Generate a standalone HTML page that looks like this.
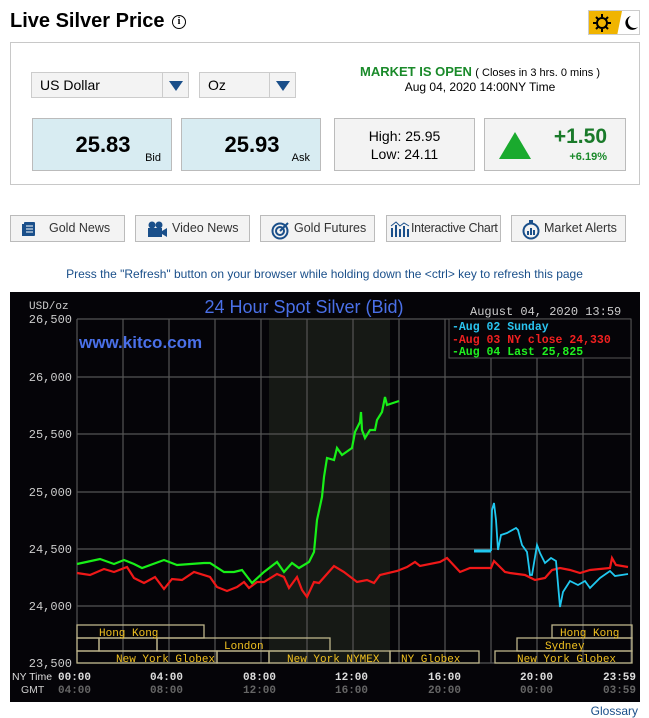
<!DOCTYPE html>
<html><head><meta charset="utf-8"><style>
*{box-sizing:border-box;margin:0;padding:0}
body{width:649px;height:717px;background:#fff;font-family:"Liberation Sans",Arial,sans-serif;position:relative;overflow:hidden;color:#000}
.a{position:absolute}
.box{position:absolute;border:1px solid #c8c8c8}
.sel{position:absolute;height:26px;border:1px solid #ccc;background:#f3f3f3;font-size:14px;line-height:24px;padding-left:8px}
.sel .ar{position:absolute;right:0;top:0;width:26px;height:24px;border-left:1px solid #ccc}
.sel .ar:after{content:"";position:absolute;left:6px;top:8px;border-left:7px solid transparent;border-right:7px solid transparent;border-top:10px solid #1a4f8a}
.pb{position:absolute;top:118px;height:53px;border:1px solid #bbb}
.btn{position:absolute;top:215px;height:27px;width:115px;border:1px solid #bbb;background:#f3f3f3;font-size:12.5px;color:#333;line-height:25px;white-space:nowrap;overflow:hidden}
.btn svg{position:absolute;left:10px;top:4px}
.btn span{position:absolute}
</style></head><body>
<div class="a" style="left:10px;top:10px;font-size:20px;font-weight:bold;">Live Silver Price</div>
<div class="a" style="left:172px;top:15px;width:14px;height:14px;border:1.6px solid #000;border-radius:50%;font-size:10px;font-weight:bold;text-align:center;line-height:11px;font-family:'Liberation Serif',serif">i</div>
<div class="a" style="left:588px;top:10px;width:52px;height:25px;border:1px solid #ccc;overflow:hidden">
<svg width="52" height="25"><polygon points="0,0 33,0 28,25 0,25" fill="#f0b400"/><circle cx="13" cy="12" r="5" fill="none" stroke="#000" stroke-width="2"/><g stroke="#000" stroke-width="2"><line x1="13" y1="3" x2="13" y2="6"/><line x1="13" y1="18" x2="13" y2="21"/><line x1="4" y1="12" x2="7" y2="12"/><line x1="19" y1="12" x2="22" y2="12"/><line x1="7" y1="6" x2="9" y2="8"/><line x1="17" y1="16" x2="19" y2="18"/><line x1="19" y1="6" x2="17" y2="8"/><line x1="7" y1="18" x2="9" y2="16"/></g><path d="M42 5 A7 7 0 1 0 49 16 A6 6 0 0 1 42 5Z" fill="#000"/></svg></div>

<div class="box" style="left:10px;top:42px;width:630px;height:143px"></div>
<div class="sel" style="left:31px;top:72px;width:158px">US Dollar<div class="ar"></div></div>
<div class="sel" style="left:199px;top:72px;width:97px">Oz<div class="ar"></div></div>
<div class="a" style="left:340px;top:65px;width:280px;text-align:center;font-size:12px;line-height:14px"><b style="color:#1a8a2a;font-size:13px">MARKET IS OPEN</b> <span style="font-size:11px">( Closes in 3 hrs. 0 mins )</span><br>Aug 04, 2020 14:00NY Time</div>

<div class="pb" style="left:32px;width:140px;background:#d8ecf2"><div class="a" style="left:0;width:140px;top:13px;text-align:center;font-size:22px;font-weight:bold">25.83</div><div class="a" style="right:10px;top:33px;font-size:11px">Bid</div></div>
<div class="pb" style="left:181px;width:140px;background:#d8ecf2"><div class="a" style="left:0;width:140px;top:13px;text-align:center;font-size:22px;font-weight:bold">25.93</div><div class="a" style="right:10px;top:33px;font-size:11px">Ask</div></div>
<div class="pb" style="left:334px;width:141px;background:#f3f3f3;text-align:center;font-size:14px;line-height:18px;padding-top:8px">High: 25.95<br>Low: 24.11</div>
<div class="pb" style="left:484px;width:142px;background:#f3f3f3"><svg class="a" style="left:14px;top:13px" width="32" height="28"><polygon points="16,0 32,27 0,27" fill="#1aaa2e"/></svg><div class="a" style="right:18px;top:6px;font-size:21px;font-weight:bold;color:#1a7a2a">+1.50</div><div class="a" style="right:18px;top:32px;font-size:11px;font-weight:bold;color:#1a8a2a">+6.19%</div></div>

<div class="btn" style="left:10px"><svg width="16" height="18"><rect x="3" y="2" width="11" height="14" rx="1" fill="#1a4f8a"/><rect x="1" y="4" width="3" height="12" fill="#1a4f8a"/><g stroke="#fff" stroke-width="1"><line x1="5" y1="6" x2="12" y2="6"/><line x1="5" y1="9" x2="12" y2="9"/><line x1="5" y1="12" x2="12" y2="12"/></g></svg><span style="left:38px">Gold News</span></div>
<div class="btn" style="left:135px"><svg width="22" height="18"><circle cx="6" cy="5" r="3.5" fill="#1a4f8a"/><circle cx="13" cy="5" r="3.5" fill="#1a4f8a"/><rect x="2" y="8" width="14" height="9" fill="#1a4f8a"/><polygon points="16,11 21,8 21,17 16,14" fill="#1a4f8a"/></svg><span style="left:36px">Video News</span></div>
<div class="btn" style="left:260px"><svg width="20" height="20"><circle cx="9" cy="11" r="7.5" fill="none" stroke="#1a4f8a" stroke-width="2"/><circle cx="9" cy="11" r="4" fill="none" stroke="#1a4f8a" stroke-width="2"/><line x1="9" y1="11" x2="17" y2="3" stroke="#1a4f8a" stroke-width="2"/></svg><span style="left:33px">Gold Futures</span></div>
<div class="btn" style="left:386px"><svg width="20" height="18" style="left:3px"><g fill="#1a4f8a"><rect x="1" y="8" width="2" height="9"/><rect x="5" y="5" width="2" height="12"/><rect x="9" y="9" width="2" height="8"/><rect x="13" y="6" width="2" height="11"/><rect x="17" y="9" width="2" height="8"/></g><polyline points="1,6 6,2 10,6 14,3 19,6" fill="none" stroke="#1a4f8a"/></svg><span style="left:24px;letter-spacing:-0.3px">Interactive Chart</span></div>
<div class="btn" style="left:511px"><svg width="18" height="20"><circle cx="9" cy="11" r="7.5" fill="none" stroke="#1a4f8a" stroke-width="2"/><rect x="7" y="0" width="4" height="3" fill="#1a4f8a"/><g fill="#1a4f8a"><rect x="5" y="11" width="2" height="4"/><rect x="8" y="8" width="2" height="7"/><rect x="11" y="10" width="2" height="5"/></g></svg><span style="left:32px">Market Alerts</span></div>

<div class="a" style="left:0;width:649px;top:267px;text-align:center;font-size:12px;color:#1a4f8a">Press the "Refresh" button on your browser while holding down the &lt;ctrl&gt; key to refresh this page</div>

<svg class="a" style="left:10px;top:292px" width="630" height="410" viewBox="10 292 630 410">
<rect x="10" y="292" width="630" height="410" fill="#050408"/>
<rect x="269" y="319" width="121" height="344" fill="#161915"/>
<g stroke="#555" stroke-width="1.2" fill="none">
<line x1="77" y1="319" x2="631" y2="319"/><line x1="77" y1="377" x2="631" y2="377"/><line x1="77" y1="434" x2="631" y2="434"/><line x1="77" y1="492" x2="631" y2="492"/><line x1="77" y1="549" x2="631" y2="549"/><line x1="77" y1="606" x2="631" y2="606"/><line x1="77" y1="663" x2="631" y2="663"/>
<line x1="77" y1="319" x2="77" y2="663"/><line x1="123" y1="319" x2="123" y2="663"/><line x1="169" y1="319" x2="169" y2="663"/><line x1="215" y1="319" x2="215" y2="663"/><line x1="261" y1="319" x2="261" y2="663"/><line x1="307" y1="319" x2="307" y2="663"/><line x1="353" y1="319" x2="353" y2="663"/><line x1="399" y1="319" x2="399" y2="663"/><line x1="445" y1="319" x2="445" y2="663"/><line x1="491" y1="319" x2="491" y2="663"/><line x1="537" y1="319" x2="537" y2="663"/><line x1="583" y1="319" x2="583" y2="663"/><line x1="631" y1="319" x2="631" y2="663"/>
</g>
<rect x="449" y="319" width="182" height="39" fill="#050408" stroke="#555"/>
<g font-family="Liberation Mono,monospace" font-size="11.5" font-weight="bold">
<text x="452" y="330" fill="#2ac4f0">-Aug 02 Sunday</text>
<text x="452" y="343" fill="#f02020">-Aug 03 NY close 24,330</text>
<text x="452" y="355" fill="#20f020">-Aug 04 Last 25,825</text>
</g>
<g font-family="Liberation Mono,monospace" font-size="12" fill="#ccc" text-anchor="end">
<text x="72" y="323">26,500</text><text x="72" y="381">26,000</text><text x="72" y="438">25,500</text><text x="72" y="496">25,000</text><text x="72" y="553">24,500</text><text x="72" y="610">24,000</text><text x="72" y="667">23,500</text>
</g>
<text x="29" y="309" font-family="Liberation Mono,monospace" font-size="11" fill="#ccc">USD/oz</text>
<text x="304" y="313" font-family="Liberation Sans,sans-serif" font-size="18" fill="#4a70e8" text-anchor="middle">24 Hour Spot Silver (Bid)</text>
<text x="470" y="315" font-family="Liberation Mono,monospace" font-size="12" fill="#ccc">August 04, 2020 13:59</text>
<text x="79" y="348" font-family="Liberation Sans,sans-serif" font-size="17" font-weight="bold" fill="#4a70e8">www.kitco.com</text>
<polyline fill="none" stroke="#f01818" stroke-width="2.2" points="77,573 90,575 104,569 114,572 127,567 134,578 144,583 155,577 164,589 172,579 182,580 194,572 210,577 217,587 227,591 237,587 244,582 249,588 257,582 264,582 277,574 284,577 289,588 297,577 302,590 307,597 314,582 319,583 334,566 344,572 357,582 367,580 374,583 380,575 397,571 407,567 415,562 420,566 440,562 447,558 460,572 470,568 491,568 494,561 505,572 510,573 525,575 535,580 545,578 552,570 560,568 570,570 580,573 590,570 610,568 612,558 616,565 628,567"/>
<polyline fill="none" stroke="#18f018" stroke-width="2.2" points="77,564 100,559 114,564 124,560 134,564 142,568 164,560 177,565 204,563 210,563 224,572 234,572 242,570 252,583 264,572 277,562 284,572 292,563 299,568 309,562 314,552 317,520 322,497 324,477 327,458 334,460 337,448 342,455 352,448 355,432 360,422 361,412 362,430 365,438 370,430 375,430 377,420 382,412 385,397 387,405 399,401"/>
<line x1="474" y1="551" x2="491" y2="551" stroke="#20c8f0" stroke-width="3"/>
<polyline fill="none" stroke="#20c8f0" stroke-width="1.8" points="491,551 492,510 494,503 496,520 498,550 501,535 507,533 516,528 518,530 522,545 527,552 530,575 532,575 537,545 540,553 545,563 551,558 556,561 560,607 563,592 570,581 578,585 585,581 590,588 600,578 610,571 615,576 628,574"/>
<g fill="none" stroke="#bdb48a" stroke-width="1.3">
<rect x="77" y="625" width="127" height="13"/><rect x="552" y="625" width="80" height="13"/>
<rect x="77" y="638" width="22" height="13"/><rect x="99" y="638" width="58" height="13"/><rect x="157" y="638" width="173" height="13"/><rect x="517" y="638" width="115" height="13"/>
<rect x="77" y="651" width="140" height="12"/><rect x="217" y="651" width="52" height="12"/><rect x="269" y="651" width="121" height="12"/><rect x="390" y="651" width="89" height="12"/><rect x="495" y="651" width="137" height="12"/>
</g>
<g font-family="Liberation Mono,monospace" font-size="11" fill="#f0c020">
<text x="99" y="636">Hong Kong</text><text x="560" y="636">Hong Kong</text>
<text x="224" y="649">London</text><text x="545" y="649">Sydney</text>
<text x="116" y="662">New York Globex</text><text x="287" y="662">New York NYMEX</text><text x="401" y="662">NY Globex</text><text x="517" y="662">New York Globex</text>
</g>
<text x="12" y="680" font-family="Liberation Sans,sans-serif" font-size="10.5" fill="#ddd">NY Time</text>
<g font-family="Liberation Mono,monospace" font-size="11" font-weight="bold" fill="#ddd">
<text x="58" y="680">00:00</text><text x="150" y="680">04:00</text><text x="243" y="680">08:00</text><text x="335" y="680">12:00</text><text x="428" y="680">16:00</text><text x="520" y="680">20:00</text><text x="603" y="680">23:59</text>
</g>
<text x="21" y="693" font-family="Liberation Sans,sans-serif" font-size="10.5" fill="#ccc">GMT</text>
<g font-family="Liberation Mono,monospace" font-size="11" font-weight="bold" fill="#666">
<text x="58" y="693">04:00</text><text x="150" y="693">08:00</text><text x="243" y="693">12:00</text><text x="335" y="693">16:00</text><text x="428" y="693">20:00</text><text x="520" y="693">00:00</text><text x="603" y="693">03:59</text>
</g>
</svg>
<div class="a" style="right:11px;top:704px;font-size:12px;color:#1a4f8a">Glossary</div>
</body></html>
